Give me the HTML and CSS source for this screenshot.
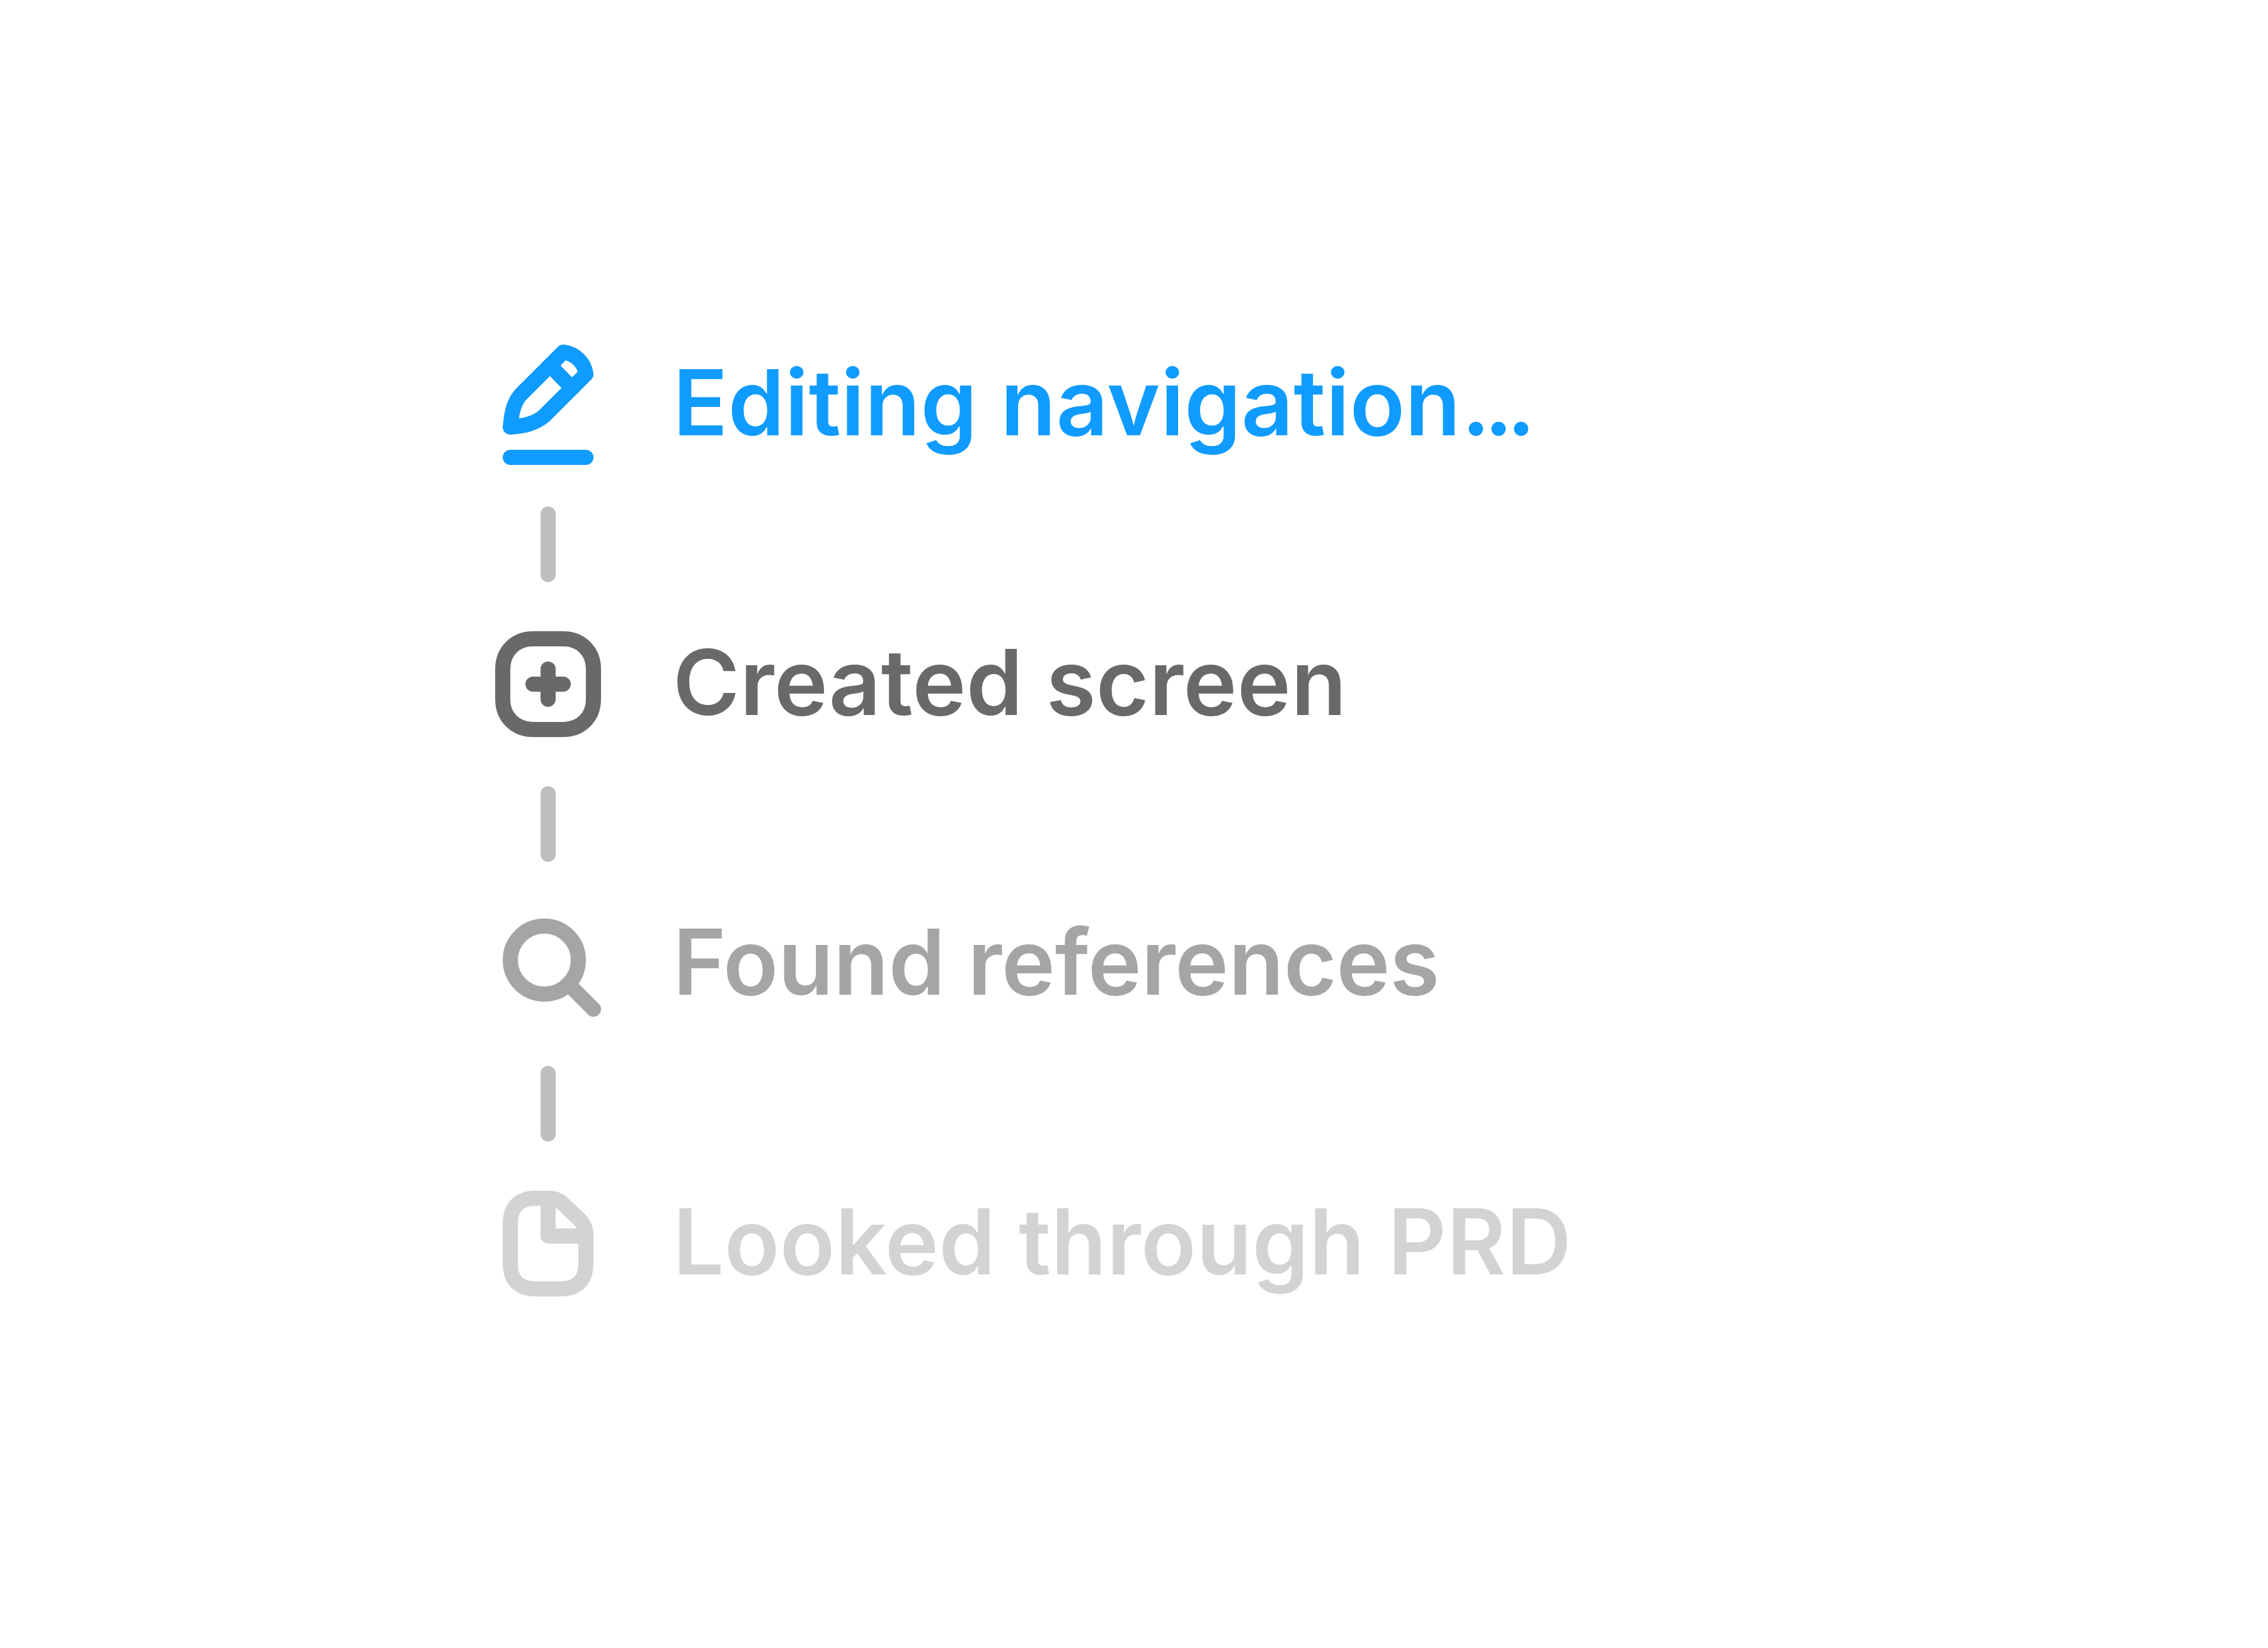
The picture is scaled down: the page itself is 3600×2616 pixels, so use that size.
FILE: index.html

```html
<!DOCTYPE html>
<html lang="en">
<head>
    <meta charset="UTF-8">
    <title>Agent steps</title>
    <link rel="stylesheet" href="styles.css">
</head>
<body>

<div class="steps">
    <div class="step step-active">
        <svg class="icon" viewBox="0 0 240 240">
            <path d="M50 158C52 134 56 118 67 106L134 39C153 41 168 56 170 74L104 140C90 152 74 156 50 158Z"/>
            <path d="M113 60L148 96"/>
            <path d="M50 206H170"/>
        </svg>
        <span class="label">Editing navigation<span class="dots">...</span></span>
    </div>
    <div class="connector"></div>
    <div class="step step-done">
        <svg class="icon" viewBox="0 0 240 240">
            <path d="M86 50H134C162 50 182 70 182 98V146C182 174 162 194 134 194H86C58 194 38 174 38 146V98C38 70 58 50 86 50Z"/>
            <path d="M110 98V146M86 122H134"/>
        </svg>
        <span class="label">Created screen</span>
    </div>
    <div class="connector"></div>
    <div class="step step-older">
        <svg class="icon" viewBox="0 0 240 240">
            <circle cx="104" cy="116" r="54"/>
            <path d="M142 154L182 194"/>
        </svg>
        <span class="label">Found references</span>
    </div>
    <div class="connector"></div>
    <div class="step step-oldest">
        <svg class="icon" viewBox="0 0 240 240">
            <path d="M50 90C50 64 64 50 90 50H112C122 50 129 54 135 60L162 86C167 92 170 100 170 108V154C170 180 156 194 130 194H90C64 194 50 180 50 154Z"/>
            <path d="M110 50V110H170"/>
        </svg>
        <span class="label">Looked through PRD</span>
    </div>
</div>

</body>
</html>
```

FILE: styles.css

```css
body {
    margin: 0;
    background-color: #fff;
    font-family: Inter, "Liberation Sans", sans-serif;
}
.steps {
    display: flex;
    flex-direction: column;
    padding-top: 520px;
    padding-left: 760px;
}
.step {
    display: flex;
    align-items: center;
    gap: 68px;
    height: 240px;
}
.icon {
    width: 240px;
    height: 240px;
    flex-shrink: 0;
    fill: none;
    stroke: currentColor;
    stroke-width: 24;
    stroke-linecap: round;
    stroke-linejoin: round;
}
.label {
    font-size: 144px;
    font-weight: 600;
    letter-spacing: 0.3px;
    white-space: nowrap;
    margin-top: -4px;
}
.dots {
    letter-spacing: -10px;
    margin-left: 1px;
}
.connector {
    width: 24px;
    height: 120px;
    margin: 44px 0 40px 98px;
    border-radius: 12px;
    background-color: #bebebe;
}
.step-active { color: #0f9bff; }
.step-done { color: #696969; }
.step-older { color: #a5a5a5; }
.step-older .label { letter-spacing: -0.35px; }
.step-oldest { color: #d3d3d3; }
```
